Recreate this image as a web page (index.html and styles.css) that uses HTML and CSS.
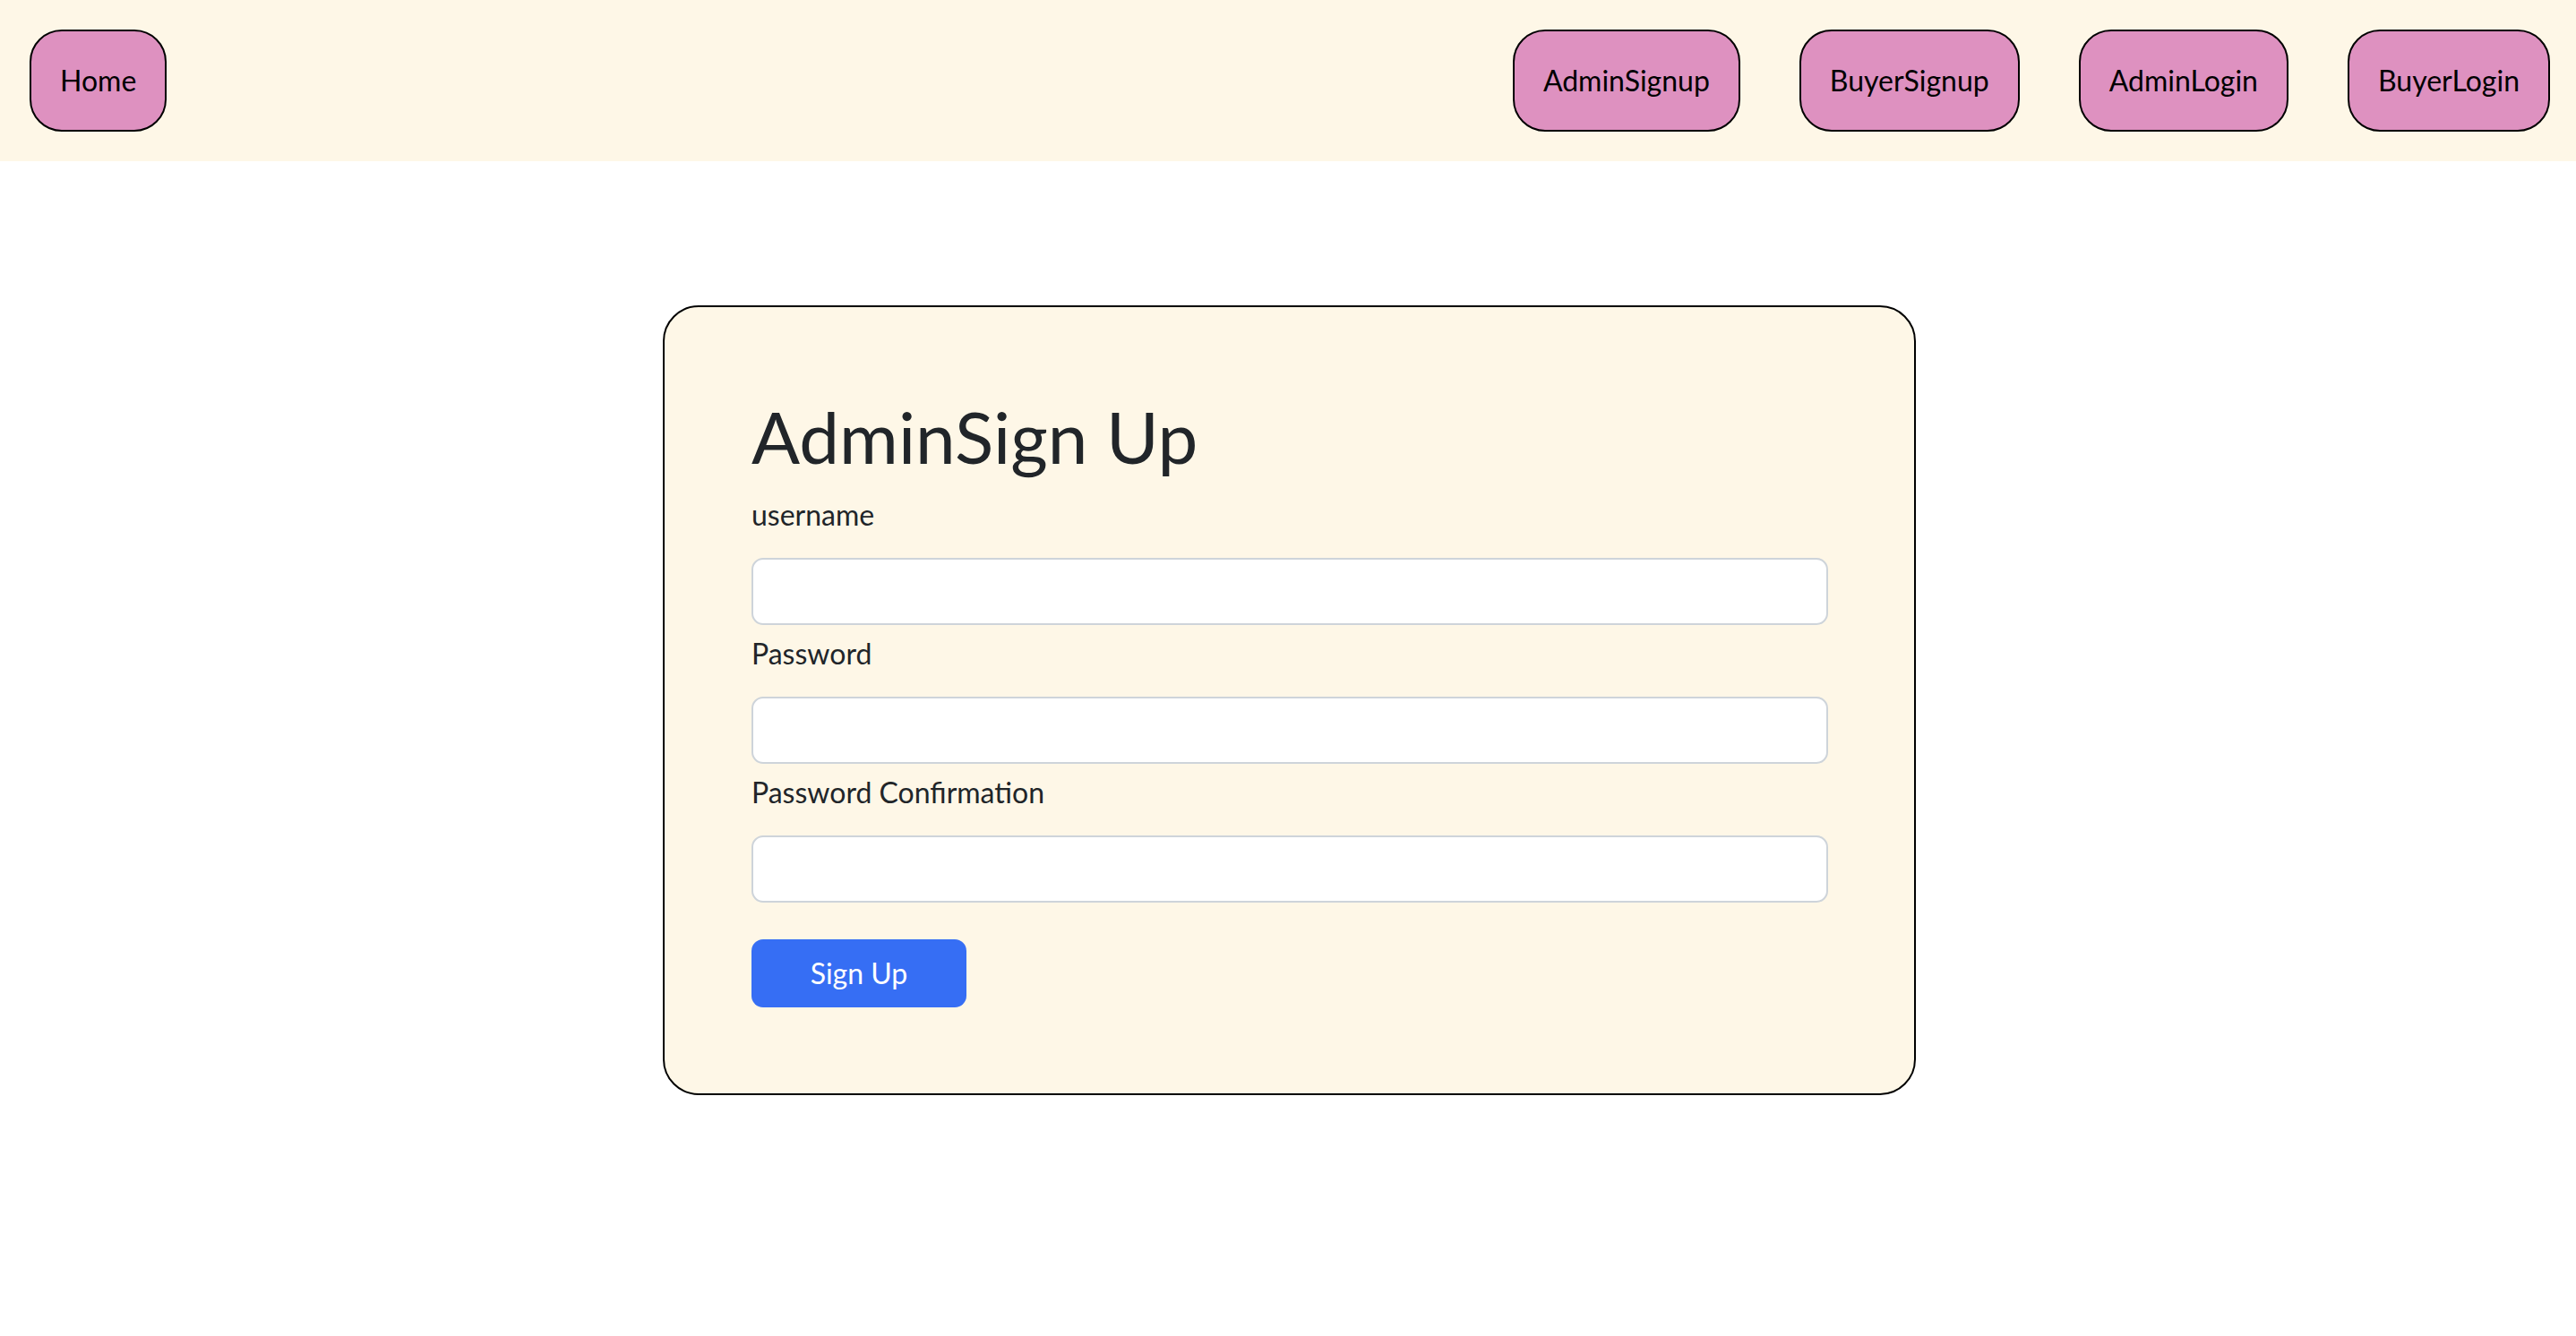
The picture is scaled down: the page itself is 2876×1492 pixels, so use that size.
FILE: index.html
```html
<!DOCTYPE html>
<html lang="en">
<head>
<meta charset="utf-8">
<title>AdminSign Up</title>
<link rel="stylesheet" href="styles.css">
</head>
<body>
<nav class="topnav">
  <a class="navbtn" href="#">Home</a>
  <div class="navright">
    <a class="navbtn" href="#">AdminSignup</a>
    <a class="navbtn" href="#">BuyerSignup</a>
    <a class="navbtn" href="#">AdminLogin</a>
    <a class="navbtn" href="#">BuyerLogin</a>
  </div>
</nav>
<main class="card">
  <h1 class="title">AdminSign Up</h1>
  <form class="form">
    <label class="label" for="u">username</label>
    <input class="field" id="u" type="text">
    <label class="label" for="p">Password</label>
    <input class="field" id="p" type="password">
    <label class="label" for="pc">Password Confirmation</label>
    <input class="field" id="pc" type="password">
    <button class="submit" type="button">Sign Up</button>
  </form>
</main>
</body>
</html>
```
FILE: styles.css
```css
* { box-sizing: border-box; }
html, body { margin: 0; padding: 0; }
body {
  font-family: Lato, "Liberation Sans", sans-serif;
  font-size: 32px;
  color: #212529;
  background: #ffffff;
}
.topnav {
  height: 180px;
  background: #fef7e7;
  display: flex;
  align-items: center;
  justify-content: space-between;
  padding: 0 29px 0 33px;
}
.navright {
  display: flex;
  gap: 66px;
}
.navbtn {
  display: block;
  background: #de91c0;
  border: 2px solid #000;
  border-radius: 36px;
  padding: 36px 32px;
  line-height: 38px;
  font-size: 32px;
  color: #000;
  text-decoration: none;
}
.card {
  width: 1399px;
  margin: 161px 0 0 calc(50% - 698px);
  background: #fef7e7;
  border: 2px solid #000;
  border-radius: 40px;
  padding: 96px 96px 96px 97px;
}
.title {
  margin: 0 0 16px;
  font-size: 80px;
  font-weight: 400;
  line-height: 96px;
  color: #212529;
}
.form {
  display: flex;
  flex-direction: column;
  align-items: flex-start;
}
.label {
  display: block;
  line-height: 48px;
  margin-bottom: 24px;
}
.field {
  display: block;
  width: 100%;
  height: 75px;
  margin: 0 0 8px;
  background: #fff;
  border: 2px solid #ced4da;
  border-radius: 13px;
  font-family: inherit;
  font-size: 32px;
}
.submit {
  margin-top: 33px;
  width: 240px;
  height: 76px;
  background: #366ef4;
  color: #fff;
  border: none;
  border-radius: 13px;
  font-family: inherit;
  font-size: 32px;
  line-height: 48px;
  padding: 0;
}
```
